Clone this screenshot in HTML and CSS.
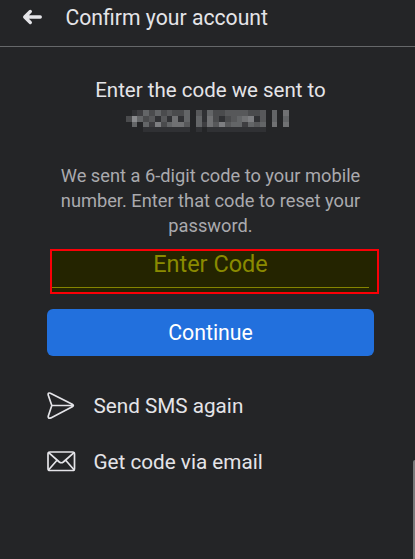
FILE: index.html
```html
<!DOCTYPE html>
<html lang="en">
<head>
<meta charset="utf-8">
<title>Confirm your account</title>
<link rel="stylesheet" href="styles.css">
</head>
<body>
<div class="screen">
  <header class="topbar">
    <svg class="back" viewBox="0 0 20 18" width="20" height="18" aria-hidden="true"><path d="M18.3 9H3M8.3 3.500L2.700 9l5.600 5.500"/></svg>
    <h1 class="title">Confirm your account</h1>
  </header>
  <main class="content">
    <h2 class="heading">Enter the code we sent to</h2>
    <div class="redacted" id="redacted"></div>
    <p class="note">We sent a 6-digit code to your mobile<br>number. Enter that code to reset your<br>password.</p>
    <div class="field"><span class="placeholder">Enter Code</span></div>
    <button class="continue">Continue</button>
    <nav class="actions">
      <a class="action"><svg width="30" height="28" viewBox="0 0 30 28" aria-hidden="true"><path d="M3.4 1.2L25.300 12.2q2.100 1.3 0 2.6L3.8 25.9Q.8 27 1.3 24L4.8 13.5 1.2 3Q.8.3 3.4 1.2ZM4.8 13.5H26"/></svg><span class="sms">Send SMS again</span></a>
      <a class="action"><svg width="30" height="28" viewBox="0 0 30 28" aria-hidden="true"><rect x="1" y="4" width="26.5" height="18.5" rx="2"/><path d="M1.7 4.700l10.6 9.3q2 1.5 4 0L27 4.700M1.7 21.800l8.3-9.5M27 21.800l-8.300-9.500"/></svg><span class="mail">Get code via email</span></a>
    </nav>
  </main>
  <div class="scrollbar"></div>
</div>
<script src="mosaic.js"></script>
</body>
</html>
```
FILE: styles.css
```css
* { box-sizing: border-box; }
body { margin: 0; background: #242527; font-family: Roboto, sans-serif; color: #e4e4e8; }
.screen { position: relative; width: 415px; height: 559px; overflow: hidden; }
svg { fill: none; stroke: #e4e4e8; stroke-width: 1.7; stroke-linecap: round; stroke-linejoin: round; flex: none; }
.topbar { height: 47px; padding: 0 0 11px 22px; display: flex; align-items: center; border-bottom: 1px solid #66686a; }
.back { stroke-width: 3.3; margin-top: -2px; }
.title { margin: 0 0 0 23.500px; font-size: 21.200px; font-weight: 400; line-height: 36px; white-space: nowrap; }
.content { padding: 30px 41px 0 47px; }
.heading { margin: 0; font-size: 20.500px; font-weight: 400; line-height: 26px; text-align: center; white-space: nowrap; }
.redacted { display: grid; grid-template-columns: repeat(29, 5.83px); grid-template-rows: repeat(3, 5.83px) 4.2px; height: 22px; margin: 7px 0 0 78.800px; }
.cell { background: #8a8b8e; }
.note { margin: 31px 0 0; font-size: 18.250px; line-height: 25px; color: #aaaaae; text-align: center; white-space: nowrap; }
.field { height: 45px; margin: 11px -5px 0 3px; padding: 0 8px 0 0; border: 2px solid #fb0007; background: #242400; text-align: center; }
.placeholder { display: block; height: 37px; border-bottom: 1px solid #848400; font-size: 23.500px; line-height: 27px; color: #8a8a00; }
.continue { display: block; width: 327px; height: 47px; margin-top: 15px; padding: 0; border: 0; border-radius: 6px; background: #2270dd; color: #fff; font: 400 21.300px/48px Roboto, sans-serif; }
.actions { margin-top: 22px; }
.action { display: flex; align-items: center; height: 56px; gap: 16.500px; font-size: 20.700px; white-space: nowrap; }
.scrollbar { position: absolute; left: 413px; top: 460px; width: 4px; height: 110px; border-radius: 2px 0 0; background: #77797a; }
```
FILE: mosaic.js
```js
// Brightness levels of the masked number, one digit per cell.
const rows = [
  "01253534335041533444433405060",
  "38534141615051631345671405050",
  "05052735664052647455254506060",
  "00011111111010111111111100000"
];
const grid = document.getElementById("redacted");
for (const level of rows.join("")) {
  const cell = document.createElement("span");
  cell.className = "cell";
  cell.style.opacity = Number(level) / 8;
  grid.append(cell);
}
```
